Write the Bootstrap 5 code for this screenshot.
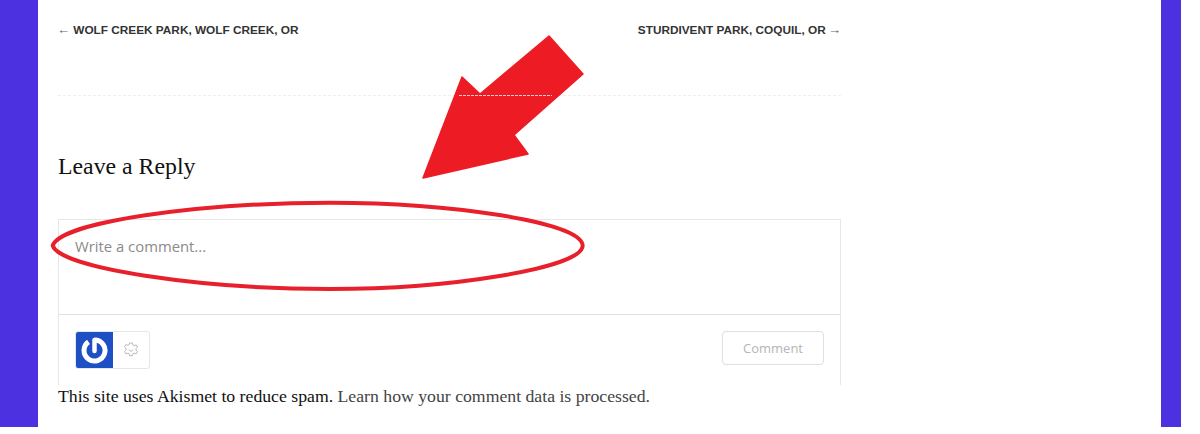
<!DOCTYPE html>
<html lang="en">
<head>
  <meta charset="UTF-8">
  <meta name="viewport" content="width=device-width, initial-scale=1.0">
  <title>Leave a Reply</title>
  <link href="https://cdn.jsdelivr.net/npm/bootstrap@5.3.3/dist/css/bootstrap.min.css" rel="stylesheet">
  <script src="https://cdn.jsdelivr.net/npm/bootstrap@5.3.3/dist/js/bootstrap.bundle.min.js" defer></script>
  <style>
    body { background: #fff; overflow: hidden; }
    .page-frame { width: 1181px; height: 427px; position: relative; }
    .side-left { width: 38px; background: #4c31e0; }
    .side-right { width: 20px; background: #4c31e0; }
    .main-col { padding: 0 20px; width: 823px; }
    .post-nav { height: 96px; padding-top: 21px; border-bottom: 1px dashed #efefef; font: bold 11.8px/18px "Liberation Sans", Arial, sans-serif; text-transform: uppercase; color: #333; }
    .post-nav .arrow-txt { display: inline-block; color: #666; font: 13px/0 "Liberation Sans", Arial, sans-serif; }
    .post-nav .arrow-back { width: 12px; margin-left: -1px; margin-right: 1px; }
    .post-nav .arrow-next { width: 12px; text-indent: -1px; }
    .reply-title { font: 400 23.8px/30px "Liberation Serif", serif; color: #111; margin: 55px 0 38px; }
    .comment-box { height: 166px; border: 1px solid #e6e6e6; border-bottom: 0; }
    .comment-input { height: 95px; padding: 15px 16px 0; border-bottom: 1px solid #e0e0e0; font: 14.85px/22px "Open Sans", sans-serif; color: #8a8a8a; }
    .comment-foot { padding: 16px 16px 0; }
    .login-group { width: 75px; height: 38px; border: 1px solid #e6e6e6; border-radius: 3px; overflow: hidden; }
    .login-blue { width: 37px; background: #1f4fc4; }
    .comment-btn { width: 102px; height: 34px; border: 1px solid #dfdfdf; border-radius: 4px; background: #fff; font: 13px/32px "Open Sans", sans-serif; color: #b5b5b5; text-align: center; padding: 0; }
    .akismet-note { font: 17.73px/23px "Liberation Serif", serif; color: #111; margin: 0; }
    .akismet-note .learn { color: #444; }
    .markup { position: absolute; left: 0; top: 0; pointer-events: none; }
  </style>
</head>
<body>
  <div class="page-frame d-flex">
    <div class="side-left"></div>
    <div class="main-col">
      <div class="post-nav d-flex justify-content-between">
        <span><span class="arrow-txt arrow-back">&larr;</span> Wolf Creek Park, Wolf Creek, OR</span>
        <span>Sturdivent Park, Coquil, OR <span class="arrow-txt arrow-next">&rarr;</span></span>
      </div>
      <h3 class="reply-title">Leave a Reply</h3>
      <div class="comment-box">
        <div class="comment-input">Write a comment...</div>
        <div class="comment-foot d-flex justify-content-between align-items-start">
          <div class="login-group d-flex">
            <div class="login-blue d-flex align-items-center justify-content-center">
              <svg width="27" height="27" viewBox="0 0 27 27" fill="none" stroke="#fff" stroke-width="5">
                <path d="M7.500 4.900A10.500 10.500 0 1 0 13.500 3"/>
                <path d="M13.500 3v11" stroke-width="4.500" stroke-linecap="round"/>
              </svg>
            </div>
            <div class="flex-grow-1 d-flex align-items-center justify-content-center">
              <svg width="16" height="16" viewBox="0 0 16 16" fill="none" stroke="#b8b8b8" stroke-width="1">
                <path d="M6.600 1h2.800l.4 2 1.400.7 1.900-.8 1.400 2.300-1.500 1.400v1.600l1.500 1.400-1.400 2.300-1.900-.8-1.400.7-.4 2H6.600l-.4-2-1.400-.7-1.900.8-1.400-2.300 1.500-1.400V6.200L1.500 4.800l1.400-2.300 1.900.8 1.400-.7z"/>
                <path d="M5.800 7.500 8 9.500l2.200-2"/>
              </svg>
            </div>
          </div>
          <button type="button" class="comment-btn">Comment</button>
        </div>
      </div>
      <p class="akismet-note">This site uses Akismet to reduce spam. <span class="learn">Learn how your comment data is processed.</span></p>
    </div>
    <div class="flex-grow-1"></div>
    <div class="side-right"></div>

    <svg class="markup" width="1181" height="427" viewBox="0 0 1181 427">
      <polygon points="423,178 528,154 514,135 583,74 549,36 480,94 462,77" fill="#ed1c24" stroke="#ed1c24" stroke-width="1.500" stroke-linejoin="round"/>
      <line x1="459" y1="95.500" x2="552" y2="95.500" stroke="#f9c9cb" stroke-width="1" stroke-dasharray="3 1"/>
      <path d="M52.700 245.700C60 222 200 202.700 330 202.700C450 202.700 582 222 582.700 245.700C582 268 450 289 330 289C200 289 60 268 52.700 245.700Z" fill="none" stroke="#e8202b" stroke-width="4"/>
    </svg>
  </div>
</body>
</html>
